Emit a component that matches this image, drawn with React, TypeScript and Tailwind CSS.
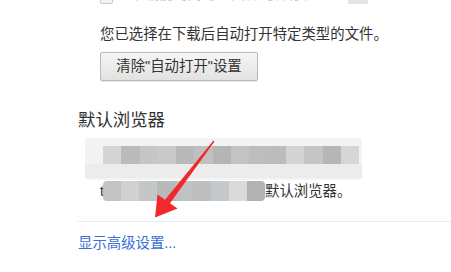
import React from 'react'

const font = { fontFamily: '"Liberation Sans", "Noto Sans CJK SC", sans-serif' }

const topBlocks = ['#d5d5d5', '#bbbbbb', '#c6c6c6', '#c9c9c9', '#b9b9b9', '#c0c0c0', '#b5b5b5', '#c3c3c3', '#bdbdbd', '#bcbcbc', '#d3d3d3', '#c5c5c5', '#b6b6b6', '#d6d6d9']
const lineBlocks = ['#c2c3c5', '#cfd1d2', '#c3c7c8', '#b8b9bb', '#bfc1c2', '#bcbebf', '#c6c9cb', '#dadada', '#b0b2b5']

function Arrow() {
  return (
    <svg className="absolute left-0 top-0 pointer-events-none" width="451" height="272" viewBox="0 0 451 272">
      <polygon
        points="213.5,140.6 214.5,141.4 170,203.3 177.5,208.5 155,217.5 157.5,194.5 165,199.7"
        fill="#f02a2a"
      />
    </svg>
  )
}

export default function App() {
  return (
    <div className="relative w-[451px] h-[272px] overflow-hidden bg-white text-[#333333]" style={font}>
      <div className="flex flex-col pl-[78px]">
        {/* cut-off checkbox row */}
        <div className="h-[4px] overflow-hidden flex flex-col justify-end ml-[22px]">
          <div className="flex items-end gap-[17px] shrink-0">
            <div className="w-[13px] h-[13px] border border-[#c8c8c8] rounded-[2px] bg-[#f3f3f3]" />
            <div className="text-[14.4px] leading-[20px] text-[#c9c9c9]">下载前询问每个文件的保存位置</div>
            <div className="w-[20px] h-[13px] bg-[#e4e4e4]" />
          </div>
        </div>

        <div className="ml-[22px] mt-[20px] h-[20px] text-[14.4px] leading-[20px] text-[#333333]">
          您已选择在下载后自动打开特定类型的文件。
        </div>

        <button className="ml-[22px] mt-[8px] w-[158px] h-[29px] rounded-[2px] border border-[#b9b9b9] bg-gradient-to-b from-[#f6f6f6] to-[#e2e2e2] shadow-[0_1px_0_rgba(0,0,0,0.08)] text-[14.4px] text-[#333333] flex items-center justify-center">
          清除"自动打开"设置
        </button>

        <div className="mt-[29px] h-[20px] text-[17.4px] leading-[20px] text-[#303030]">默认浏览器</div>

        {/* blurred browser info */}
        <div className="ml-[7px] mt-[8px] w-[277px] h-[42px] rounded-[4px] bg-[#f3f3f3] flex flex-col pt-[8px]">
          <div className="flex pl-[18px] h-[18px] blur-[0.5px]">
            {topBlocks.map((c, i) => (
              <div key={i} className="w-[18.3px] h-full" style={{ backgroundColor: c }} />
            ))}
          </div>
          <div className="h-[14px] bg-[#ececec]" />
        </div>

        <div className="ml-[22px] h-[22px] flex items-center text-[14.4px] leading-[20px] text-[#333333]">
          <span>t</span>
          <div className="flex h-[20px] -ml-[1px] rounded-[4px] overflow-hidden blur-[0.4px]">
            {lineBlocks.map((c, i) => (
              <div key={i} className="w-[18px] h-full" style={{ backgroundColor: c }} />
            ))}
          </div>
          <span>默认浏览器。</span>
        </div>

        <div className="mt-[19px] h-px bg-[#ececec]" />

        <a className="mt-[12px] h-[18px] text-[14.4px] leading-[18px] text-[#3d6fd6] cursor-pointer">显示高级设置...</a>
      </div>
      <Arrow />
    </div>
  )
}
